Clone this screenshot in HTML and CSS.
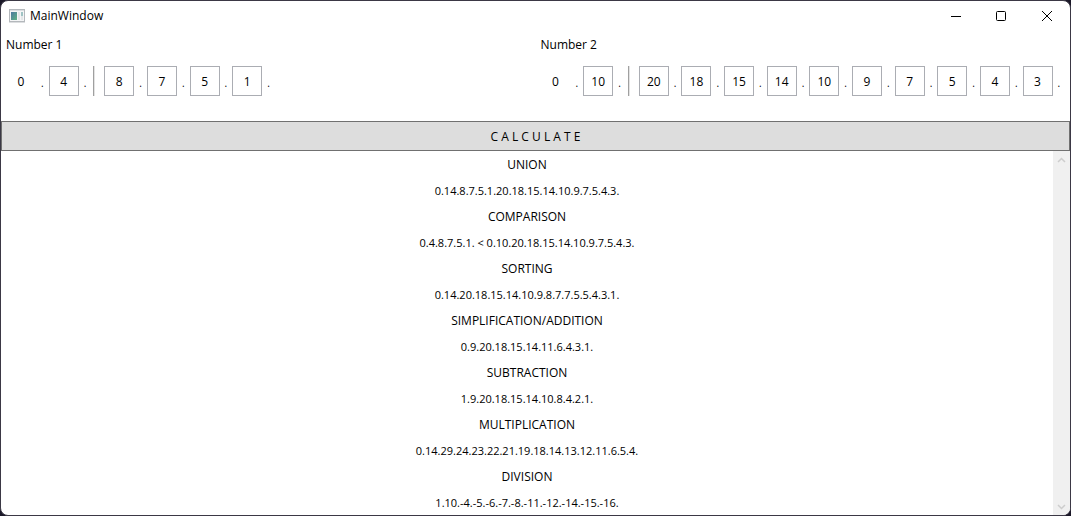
FILE: index.html
```html
<!DOCTYPE html>
<html lang="en">
<head>
<meta charset="utf-8">
<title>MainWindow</title>
<link rel="stylesheet" href="styles.css">
</head>
<body>
<div class="window">
  <header class="titlebar">
    <svg class="app-icon" width="16" height="14" viewBox="0 0 16 14" aria-hidden="true">
      <defs><linearGradient id="pane" x1="0" y1="0" x2="1" y2="1"><stop offset="0" stop-color="#4c78a0"/><stop offset="1" stop-color="#5fb283"/></linearGradient></defs>
      <rect x="0.5" y="0.5" width="15" height="12" fill="#f4f5f6" stroke="#b4b8bc"/>
      <path d="M1 1.5H15" stroke="#dadde0"/>
      <rect x="2" y="3" width="6" height="8" fill="url(#pane)"/>
      <rect x="9" y="3" width="2" height="8" fill="#e4e6e8"/>
      <rect x="12" y="3" width="2" height="4" fill="#9fc3c4"/>
      <rect x="12" y="7" width="2" height="4" fill="#e4e6e8"/>
      <path d="M0 13.5H16" stroke="#dcdee0"/>
    </svg>
    <h1 class="title">MainWindow</h1>
    <div class="controls">
      <button class="control" type="button" aria-label="Minimize"><svg width="12" height="10" viewBox="0 0 12 10"><path d="M2 5.5H12" stroke="#000"/></svg></button>
      <button class="control" type="button" aria-label="Maximize"><svg width="10" height="10" viewBox="0 0 10 10"><rect x="0.5" y="0.5" width="9" height="9" rx="1" fill="none" stroke="#000"/></svg></button>
      <button class="control" type="button" aria-label="Close"><svg width="10" height="10" viewBox="0 0 10 10"><path d="M0 0L10 10M10 0L0 10" stroke="#000"/></svg></button>
    </div>
  </header>
  <main class="content">
    <div class="numbers">
      <section class="number" aria-labelledby="n1">
        <h2 class="label" id="n1">Number 1</h2>
        <div class="digits">
          <span class="sign">0</span><span class="dot">.</span>
          <input class="digit" aria-label="Number 1 count" value="4"><span class="dot">.</span>
          <span class="separator"></span>
          <input class="digit" aria-label="Number 1 digit 1" value="8"><span class="dot">.</span>
          <input class="digit" aria-label="Number 1 digit 2" value="7"><span class="dot">.</span>
          <input class="digit" aria-label="Number 1 digit 3" value="5"><span class="dot">.</span>
          <input class="digit" aria-label="Number 1 digit 4" value="1"><span class="dot">.</span>
        </div>
      </section>
      <section class="number" aria-labelledby="n2">
        <h2 class="label" id="n2">Number 2</h2>
        <div class="digits">
          <span class="sign">0</span><span class="dot">.</span>
          <input class="digit" aria-label="Number 2 count" value="10"><span class="dot">.</span>
          <span class="separator"></span>
          <input class="digit" aria-label="Number 2 digit 1" value="20"><span class="dot">.</span>
          <input class="digit" aria-label="Number 2 digit 2" value="18"><span class="dot">.</span>
          <input class="digit" aria-label="Number 2 digit 3" value="15"><span class="dot">.</span>
          <input class="digit" aria-label="Number 2 digit 4" value="14"><span class="dot">.</span>
          <input class="digit" aria-label="Number 2 digit 5" value="10"><span class="dot">.</span>
          <input class="digit" aria-label="Number 2 digit 6" value="9"><span class="dot">.</span>
          <input class="digit" aria-label="Number 2 digit 7" value="7"><span class="dot">.</span>
          <input class="digit" aria-label="Number 2 digit 8" value="5"><span class="dot">.</span>
          <input class="digit" aria-label="Number 2 digit 9" value="4"><span class="dot">.</span>
          <input class="digit" aria-label="Number 2 digit 10" value="3"><span class="dot">.</span>
        </div>
      </section>
    </div>
    <button class="calculate" type="button">C A L C U L A T E</button>
    <div class="output">
      <dl class="results">
        <dt>UNION</dt><dd>0.14.8.7.5.1.20.18.15.14.10.9.7.5.4.3.</dd>
        <dt>COMPARISON</dt><dd>0.4.8.7.5.1. &lt; 0.10.20.18.15.14.10.9.7.5.4.3.</dd>
        <dt>SORTING</dt><dd>0.14.20.18.15.14.10.9.8.7.7.5.5.4.3.1.</dd>
        <dt>SIMPLIFICATION/ADDITION</dt><dd>0.9.20.18.15.14.11.6.4.3.1.</dd>
        <dt>SUBTRACTION</dt><dd>1.9.20.18.15.14.10.8.4.2.1.</dd>
        <dt>MULTIPLICATION</dt><dd>0.14.29.24.23.22.21.19.18.14.13.12.11.6.5.4.</dd>
        <dt>DIVISION</dt><dd>1.10.-4.-5.-6.-7.-8.-11.-12.-14.-15.-16.</dd>
      </dl>
      <div class="scrollbar">
        <button class="scroll-button" type="button" aria-label="Scroll up" disabled><svg width="9" height="6" viewBox="0 0 9 6"><path d="M1 5L4.500 1.500L8 5" fill="none" stroke="#cdcdcd" stroke-width="1.500"/></svg></button>
        <button class="scroll-button" type="button" aria-label="Scroll down" disabled><svg width="9" height="6" viewBox="0 0 9 6"><path d="M1 1L4.500 4.500L8 1" fill="none" stroke="#cdcdcd" stroke-width="1.500"/></svg></button>
      </div>
    </div>
  </main>
</div>
</body>
</html>
```
FILE: styles.css
```css
* {
  box-sizing: border-box;
}

body {
  margin: 0;
  background: #1b1828;
  color: #000;
  font: 12px/16px "Open Sans", "Noto Sans", sans-serif;
}

button,
input {
  margin: 0;
  padding: 0;
  border: 0;
  border-radius: 0;
  background: none;
  color: inherit;
  font: inherit;
}

.window {
  display: flex;
  flex-direction: column;
  min-height: 100vh;
  overflow: hidden;
  border: 1px solid #3b3845;
  border-radius: 8px;
  background: #fff;
}

.titlebar {
  display: flex;
  align-items: center;
  height: 30px;
  padding-left: 8px;
}

.title {
  margin: 0 0 0 5px;
  font-size: 12px;
  font-weight: 400;
}

.controls {
  display: flex;
  margin-left: auto;
}

.control {
  display: grid;
  place-items: center;
  width: 46px;
  height: 28px;
}

.content {
  display: flex;
  flex: 1;
  flex-direction: column;
}

.numbers {
  display: grid;
  grid-template-columns: 1fr 1fr;
}

.number {
  padding: 1px 0 25px 5px;
}

.label {
  margin: 0 0 8px;
  padding: 5px 0;
  font-size: 12px;
  font-weight: 400;
}

.digits {
  display: flex;
}

.sign,
.digit {
  width: 30px;
  height: 30px;
  text-align: center;
}

.sign {
  line-height: 32px;
}

.digit {
  border: 1px solid #abadb3;
  line-height: 28px;
}

.dot {
  padding: 9px 5px 5px;
  font-size: 10px;
}

.separator {
  width: 2px;
  margin: 0 9px 0 2px;
  border-right: 1px solid #e3e3e3;
  background: #a0a0a0;
}

.calculate {
  height: 30px;
  padding-top: 2px;
  border: 1px solid #707070;
  background: #ddd;
}

.output {
  display: flex;
  flex: 1;
}

.results {
  flex: 1;
  margin: 0;
  text-align: center;
}

.results dt,
.results dd {
  margin: 0;
  padding: 6px 5px 4px;
}

.results dd {
  font-size: 11px;
}

.scrollbar {
  display: flex;
  flex-direction: column;
  justify-content: space-between;
  width: 17px;
  background: #f0f0f0;
}

.scroll-button {
  display: grid;
  place-items: center;
  height: 17px;
}
```
